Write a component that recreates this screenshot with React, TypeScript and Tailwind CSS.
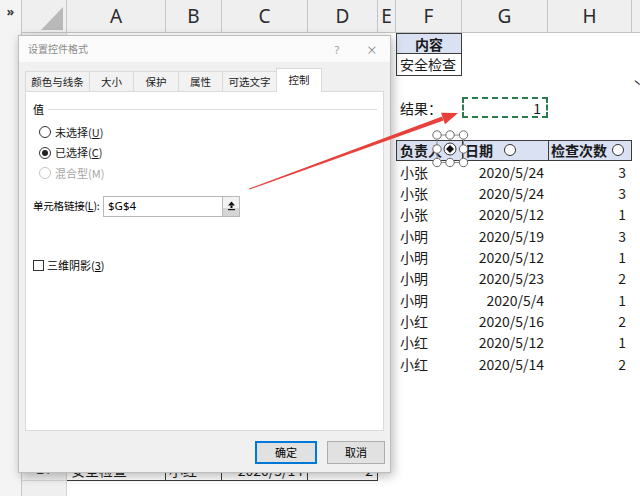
import React from "react";

const W = [
  "w-[99px]",
  "w-[56px]",
  "w-[86px]",
  "w-[70px]",
  "w-[18px]",
  "w-[66px]",
  "w-[86px]",
  "w-[84px]",
  "w-[30px]",
];
const LETTERS = ["A", "B", "C", "D", "E", "F", "G", "H", ""];

const base =
  "shrink-0 h-full flex items-center overflow-hidden whitespace-nowrap text-[14px] leading-none text-[#1a1a1a] px-[3px]";

type CellSpec = { t?: React.ReactNode; k?: string };

function Row({ n, c = {} }: { n: number; c?: Record<number, CellSpec> }) {
  return (
    <div className="flex h-[21.33px] shrink-0">
      <div className="w-[45px] shrink-0 h-full bg-[#efefef] border-r border-b border-[#d4d4d4] flex items-center justify-center text-[13px] text-[#333] font-['Noto_Sans',sans-serif]">
        {n === 21 ? n : ""}
      </div>
      {W.map((w, i) => (
        <div key={i} className={`${base} ${w} ${c[i]?.k ?? ""}`}>
          {c[i]?.t}
        </div>
      ))}
    </div>
  );
}

function Circle() {
  return <span className="inline-block w-[12px] h-[12px] rounded-full border border-[#333] bg-white shrink-0" />;
}

const data = [
  ["小张", "2020/5/24", "3"],
  ["小张", "2020/5/24", "3"],
  ["小张", "2020/5/12", "1"],
  ["小明", "2020/5/19", "3"],
  ["小明", "2020/5/12", "1"],
  ["小明", "2020/5/23", "2"],
  ["小明", "2020/5/4", "1"],
  ["小红", "2020/5/16", "2"],
  ["小红", "2020/5/12", "1"],
  ["小红", "2020/5/14", "2"],
];

function Radio({ checked, disabled, children }: { checked?: boolean; disabled?: boolean; children: React.ReactNode }) {
  return (
    <div className="flex items-center h-[20.5px] ml-[6px] gap-[4px]">
      <span
        className={`w-[12px] h-[12px] rounded-full border bg-white flex items-center justify-center ${
          disabled ? "border-[#c4c4c4]" : "border-[#333]"
        }`}
      >
        {checked && <span className="w-[6px] h-[6px] rounded-full bg-[#222]" />}
      </span>
      <span className={disabled ? "text-[#a6a6a6]" : "text-[#1a1a1a]"}>{children}</span>
    </div>
  );
}

function Dialog() {
  const tabs = [
    { t: "颜色与线条", w: "w-[64px]" },
    { t: "大小", w: "w-[44px]" },
    { t: "保护", w: "w-[45px]" },
    { t: "属性", w: "w-[44px]" },
    { t: "可选文字", w: "w-[54px]" },
  ];
  return (
    <div className="absolute left-[18px] top-[35px] w-[373px] h-[438px] bg-[#f0f0f0] border border-[#bdbdbd] shadow-[2px_3px_10px_rgba(0,0,0,0.28)] flex flex-col text-[11px] leading-none font-['Noto_Sans_CJK_SC',sans-serif]">
      <div className="h-[26px] bg-[#fbfbfb] flex items-center pl-[9px] text-[#8a8a8a] text-[10px] shrink-0">
        <span className="flex-1">设置控件格式</span>
        <span className="w-[12px] text-center text-[#999] text-[11px] font-['Noto_Sans',sans-serif]">?</span>
        <span className="w-[12px] ml-[24px] mr-[11px] text-[#888] text-[17px] font-['Noto_Sans',sans-serif] font-light">×</span>
      </div>
      <div className="h-[29px] flex items-end pl-[6px] shrink-0 text-[10.5px]">
        {tabs.map((t) => (
          <div
            key={t.t}
            className={`${t.w} h-[21px] border-t border-l border-[#dadada] bg-[#f2f2f2] flex items-center justify-center text-[#1a1a1a] mb-[-1px]`}
          >
            {t.t}
          </div>
        ))}
        <div className="w-[46px] h-[24px] border-t border-l border-r border-[#dadada] bg-white flex items-center justify-center text-[#1a1a1a] relative z-10 mb-[-1px]">
          控制
        </div>
      </div>
      <div className="mx-[6px] h-[340px] bg-white border border-[#dadada] shrink-0 pt-[10px] px-[7px]">
        <div className="h-[14px] flex items-center gap-[4px]">
          <span>值</span>
          <span className="flex-1 h-[1px] bg-[#dcdcdc] mr-[-1px]" />
        </div>
        <div className="mt-[6px]">
          <Radio>
            未选择(<span className="underline">U</span>)
          </Radio>
          <Radio checked>
            已选择(<span className="underline">C</span>)
          </Radio>
          <Radio disabled>混合型(M)</Radio>
        </div>
        <div className="mt-[12px] h-[21px] flex items-center">
          <span className="w-[70px] shrink-0 whitespace-nowrap text-[10.5px] tracking-[-0.2px]">
            单元格链接(<span className="underline">L</span>):
          </span>
          <div className="w-[120px] h-[21px] border border-[#b9b9b9] flex items-center pl-[4px] text-[11.5px] font-['Noto_Sans',sans-serif]">
            $G$4
          </div>
          <div className="w-[17px] h-[21px] border border-l-0 border-[#b9b9b9] bg-[linear-gradient(#f2f2f2_60%,#d6d6d6_60%)] flex items-center justify-center">
            <svg width="9" height="10" viewBox="0 0 9 10">
              <polygon points="4.5,0.5 1,4.5 8,4.5" fill="#111" />
              <rect x="3.5" y="4.5" width="2" height="2.5" fill="#111" />
              <rect x="1" y="8" width="7" height="1.2" fill="#111" />
            </svg>
          </div>
        </div>
        <div className="mt-[42px] h-[14px] flex items-center gap-[3px]">
          <span className="w-[11px] h-[11px] border border-[#333] bg-white" />
          <span>
            三维阴影(<span className="underline">3</span>)
          </span>
        </div>
      </div>
      <div className="mt-[10px] flex justify-end pr-[5px] gap-[10px]">
        <div className="w-[62px] h-[23px] bg-[#e1e1e1] border-2 border-[#0078d7] flex items-center justify-center">确定</div>
        <div className="w-[58px] h-[23px] bg-[#e1e1e1] border border-[#adadad] flex items-center justify-center">取消</div>
      </div>
    </div>
  );
}

function Overlay() {
  const handles: [number, number][] = [
    [437, 135],
    [450, 135],
    [463.5, 135],
    [437, 149],
    [463.5, 149],
    [437, 162.5],
    [450, 162.5],
    [463.5, 162.5],
  ];
  return (
    <svg className="absolute inset-0 pointer-events-none z-20" width="640" height="496" viewBox="0 0 640 496">
      <rect x="437" y="135" width="26.5" height="27.5" fill="none" stroke="#8a8a8a" strokeWidth="1" />
      <circle cx="450" cy="149" r="6" fill="#fff" stroke="#333" strokeWidth="1" />
      <polygon points="450,145 454,149 450,153 446,149" fill="#111" />
      {handles.map(([x, y], i) => (
        <circle key={i} cx={x} cy={y} r="4.2" fill="#fff" stroke="#6a6a6a" strokeWidth="1" />
      ))}
      <polygon points="249,188.5 249.4,189.6 443.5,120.4 442.1,116.6" fill="#e8413b" />
      <polygon points="458,113 441,112.8 445,124.2" fill="#e8413b" />
    </svg>
  );
}

export default function App() {
  const rows: React.ReactNode[] = [];
  const border = "border-[#3c3c3c]";
  for (let n = 1; n <= 22; n++) {
    let c: Record<number, CellSpec> = {};
    if (n === 1)
      c = { 5: { t: "内容", k: `bg-[#d9e1f2] border ${border} font-bold justify-center` } };
    if (n === 2) c = { 5: { t: "安全检查", k: `border-x border-b ${border}` } };
    if (n === 3) c = { 8: { t: "ˋ", k: "text-[10px] items-start pt-[3px] pl-[1px]" } };
    if (n === 4)
      c = {
        5: { t: "结果：", k: "pl-[4px]" },
        6: { t: "1", k: "border-2 border-dashed border-[#2a7a4b] justify-end pr-[5px]" },
      };
    if (n === 6)
      c = {
        5: { t: "负责人", k: `bg-[#d9e1f2] border-y border-l ${border} font-bold pl-[3px]` },
        6: {
          t: (
            <>
              <span>日期</span>
              <span className="ml-[11px]">
                <Circle />
              </span>
            </>
          ),
          k: `bg-[#d9e1f2] border-y border-l ${border} font-bold pl-[2px]`,
        },
        7: {
          t: (
            <>
              <span>检查次数</span>
              <span className="ml-[5px] flex">
                <Circle />
              </span>
            </>
          ),
          k: `bg-[#d9e1f2] border ${border} font-bold pl-[2px]`,
        },
      };
    if (n >= 7 && n <= 16) {
      const d = data[n - 7];
      c = {
        5: { t: d[0], k: "pl-[4px]" },
        6: { t: d[1], k: "justify-end pr-[4px]" },
        7: { t: d[2], k: "justify-end pr-[6px]" },
      };
    }
    if (n === 21)
      c = {
        0: { t: "安全检查", k: `border-r border-b ${border} pl-[4px]` },
        1: { t: "小红", k: `border-r border-b ${border}` },
        2: { t: "2020/5/14", k: `border-r border-b ${border} justify-end pr-[4px]` },
        3: { t: "2", k: `border-r border-b ${border} justify-end pr-[4px]` },
      };
    rows.push(<Row key={n} n={n} c={c} />);
  }

  return (
    <div className="relative w-[640px] h-[496px] overflow-hidden bg-white flex font-['Noto_Sans_CJK_SC',sans-serif]">
      <div className="w-[22px] shrink-0 bg-[#f4f4f4] border-r border-[#c6c6c6] flex justify-center pt-[6px]">
        <span className="text-[12px] font-bold text-[#333] leading-none font-['Noto_Sans',sans-serif]">»</span>
      </div>
      <div className="flex flex-col">
        <div className="flex h-[33px] shrink-0 bg-[#efefef] border-b border-[#c3c3c3]">
          <div className="w-[45px] shrink-0 border-r border-[#c6c6c6] flex items-end justify-end pr-[3px] pb-[2px]">
            <svg width="22" height="23" viewBox="0 0 22 23">
              <polygon points="22,0 22,23 0,23" fill="#b9b9b9" />
            </svg>
          </div>
          {W.map((w, i) => (
            <div
              key={i}
              className={`${w} shrink-0 border-r border-[#c6c6c6] flex items-center justify-center text-[19px] text-[#2b2b2b] font-['Noto_Sans',sans-serif]`}
            >
              {LETTERS[i]}
            </div>
          ))}
        </div>
        {rows}
      </div>
      <Dialog />
      <Overlay />
    </div>
  );
}
